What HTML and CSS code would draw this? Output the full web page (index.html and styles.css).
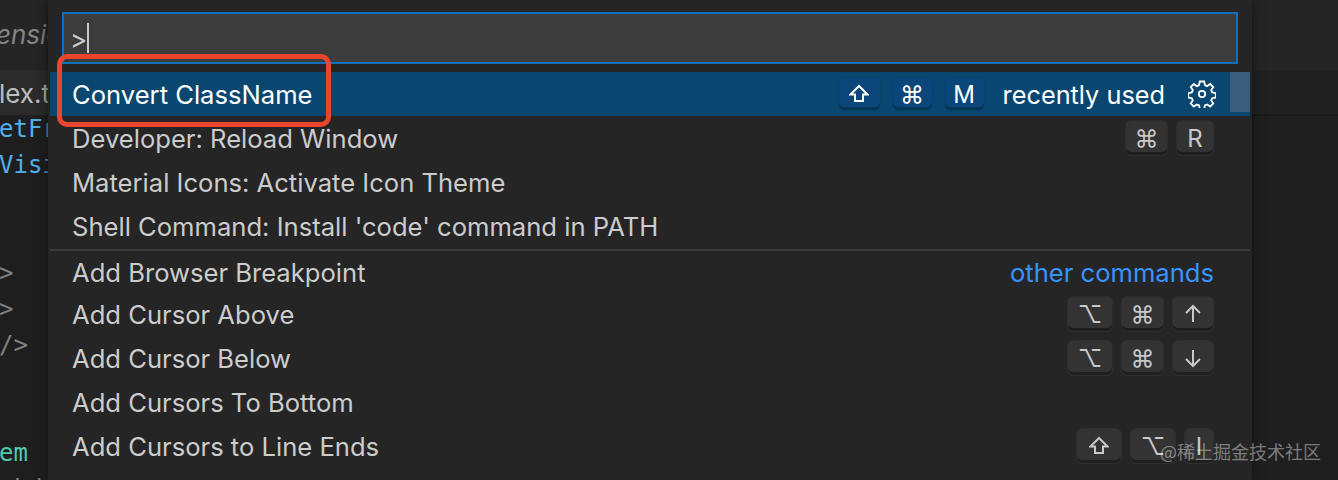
FILE: index.html
```html
<!DOCTYPE html>
<html lang="en">
<head>
  <meta charset="UTF-8" />
  <title>Command Palette</title>
  <link rel="stylesheet" href="styles.css">
</head>
<body>
  <div class="window">
    <!-- editor behind the palette -->
    <div class="editor">
      <div class="crumb">ensic</div>
      <div class="tab">lex.t</div>
      <div class="code">
        <div class="line blue">etFr</div>
        <div class="line blue">Visi</div>
        <div class="line blank"></div>
        <div class="line blank"></div>
        <div class="line grey">&gt;</div>
        <div class="line grey">&gt;</div>
        <div class="line grey">/&gt;</div>
        <div class="line blank"></div>
        <div class="line blank"></div>
        <div class="line green">em</div>
        <div class="line grey">&nbsp;kd</div>
      </div>
    </div>

    <div class="palette">
      <div class="input-wrap">
        <div class="input"><span>&gt;</span><i class="caret"></i></div>
      </div>

      <div class="row selected">
        <span class="label">Convert ClassName</span>
        <span class="keys">
          <span class="key shift"><svg class="glyph" viewBox="0 0 20 20"><path d="M10 2 1.5 10.5H6V17H14V10.5H18.5Z"/></svg></span>
          <span class="key">⌘</span>
          <span class="key">M</span>
        </span>
        <span class="note">recently used</span>
        <svg class="gear" viewBox="0 0 28 28">
          <circle cx="14" cy="14" r="3.2"/>
          <path d="M11.8 1.5h4.4l.7 3.6 2.3 1 3-2.1 3.1 3.1-2.1 3 1 2.3 3.6.7v4.4l-3.6.7-1 2.3 2.1 3-3.1 3.1-3-2.1-2.3 1-.7 3.6h-4.4l-.7-3.6-2.3-1-3 2.1-3.1-3.1 2.1-3-1-2.3-3.6-.7v-4.4l3.6-.7 1-2.3-2.1-3 3.1-3.1 3 2.1 2.3-1z"/>
        </svg>
        <i class="scroll-thumb"></i>
      </div>
      <div class="row">
        <span class="label">Developer: Reload Window</span>
        <span class="keys">
          <span class="key cmd">⌘</span>
          <span class="key letter">R</span>
        </span>
      </div>
      <div class="row"><span class="label">Material Icons: Activate Icon Theme</span></div>
      <div class="row"><span class="label">Shell Command: Install 'code' command in PATH</span></div>

      <div class="row first-other">
        <span class="label">Add Browser Breakpoint</span>
        <span class="other">other commands</span>
      </div>
      <div class="row">
        <span class="label">Add Cursor Above</span>
        <span class="keys">
          <span class="key wide">⌥</span>
          <span class="key cmd">⌘</span>
          <span class="key">
            <svg class="glyph" viewBox="0 0 20 20"><path d="M10 18V2M3 9l7-7 7 7"/></svg>
          </span>
        </span>
      </div>
      <div class="row">
        <span class="label">Add Cursor Below</span>
        <span class="keys">
          <span class="key wide">⌥</span>
          <span class="key cmd">⌘</span>
          <span class="key">
            <svg class="glyph" viewBox="0 0 20 20"><path d="M10 2V18M3 11l7 7 7-7"/></svg>
          </span>
        </span>
      </div>
      <div class="row"><span class="label">Add Cursors To Bottom</span></div>
      <div class="row">
        <span class="label">Add Cursors to Line Ends</span>
        <span class="keys">
          <span class="key wide"><svg class="glyph" viewBox="0 0 20 20"><path d="M10 2 1.5 10.5H6V17H14V10.5H18.5Z"/></svg></span>
          <span class="key wide">⌥</span>
          <span class="key narrow">I</span>
        </span>
      </div>
    </div>
  </div>

  <div class="highlight"></div>
  <div class="watermark">@稀土掘金技术社区</div>
</body>
</html>
```

FILE: styles.css
```css
* {
  box-sizing: border-box;
}

html, body {
  margin: 0;
  height: 100%;
  overflow: hidden;
}

body {
  font-family: Inter, "Noto Sans", sans-serif;
  background: #1e1e1e;
  position: relative;
}

.window {
  display: flex;
  height: 480px;
  width: 1338px;
  background: linear-gradient(#252525 0, #252525 71px, #212121 71px, #212121 114px, #181818 114px, #181818 116px, #1f1f1f 116px);
}

/* editor scraps on the left */
.editor {
  width: 48px;
  flex: none;
  overflow: hidden;
  color: #bbb;
  background: linear-gradient(#252525 0, #252525 70px, #2b2b2b 70px, #2b2b2b 115px, #1e1e1e 115px);
}

.crumb {
  height: 70px;
  padding-top: 17px;
  font-size: 26px;
  line-height: 36px;
  font-style: italic;
  color: #858585;
  margin-left: -4px;
  white-space: nowrap;
}

.tab {
  height: 45px;
  font-size: 26px;
  line-height: 48px;
  color: #bdbdbd;
  margin-left: -1px;
  white-space: nowrap;
}

.code {
  font-family: "DejaVu Sans Mono", monospace;
  font-size: 24px;
  margin-top: -4px;
  margin-left: -1px;
}

.line {
  height: 36px;
  line-height: 36px;
  white-space: nowrap;
}

.blue { color: #4fb0ea; }
.grey { color: #808080; }
.green { color: #4ec9b0; }

/* palette */
.palette {
  width: 1204px;
  flex: none;
  height: 480px;
  background: #252526;
  padding-left: 2px;
  box-shadow: 0 0 10px #111;
}

.input-wrap {
  height: 72px;
  padding: 12px 14px 0 12px;
}

.input {
  height: 52px;
  border: 2px solid #0e70c0;
  background: #3c3c3c;
  color: #ccc;
  font-size: 26px;
  line-height: 52px;
  padding-left: 6px;
  display: flex;
}

.caret {
  width: 2px;
  height: 30px;
  margin-top: 9px;
  background: #c8c8c8;
}

.row {
  height: 44px;
  margin-right: 2px;
  display: flex;
  align-items: center;
  padding: 0 36px 0 22px;
  font-size: 25.6px;
  color: #ccc;
  white-space: nowrap;
}

.row.selected {
  background: #094771;
  color: #fff;
  padding-right: 34px;
  position: relative;
}

.first-other {
  height: 43px;
  margin-top: 1px;
  border-top: 2px solid #3a3a3b;
}

.first-other .label, .other {
  padding-top: 2px;
}

.label {
  flex: 1;
}

.keys {
  display: flex;
  gap: 8px;
}

.key {
  min-width: 42px;
  height: 36px;
  display: flex;
  align-items: center;
  justify-content: center;
  font-size: 24px;
  color: #c8c8c8;
  background: #333334;
  border-radius: 6px;
  box-shadow: inset 0 -3px 0 #1f1f1f;
  border: 1px solid #2e2e2f;
}

.key.cmd {
  min-width: 43px;
}

.key.wide {
  min-width: 46px;
}

.key.letter {
  min-width: 38px;
}

.key.narrow {
  min-width: 30px;
}

.selected .keys {
  gap: 11px;
}

.selected .key {
  min-width: 41px;
  height: 34px;
  color: #fff;
  background: #0a4679;
  border-color: #0a4169;
  box-shadow: inset 0 -3px 0 #073757;
}

.selected .key.shift {
  min-width: 43px;
}

.glyph {
  width: 20px;
  height: 20px;
  fill: none;
  stroke: currentColor;
  stroke-width: 2;
}

.note {
  margin-left: 18px;
  font-size: 25.3px;
}

.gear {
  width: 28px;
  height: 28px;
  margin-left: 23px;
  fill: none;
  stroke: #fff;
  stroke-width: 1.8;
}

.scroll-thumb {
  position: absolute;
  right: 0;
  top: 0;
  width: 20px;
  height: 40px;
  background: #3a5d7b;
}

.other {
  color: #3794ff;
}

.highlight {
  position: absolute;
  left: 57px;
  top: 54px;
  width: 274px;
  height: 73px;
  border: 5px solid #e8452c;
  border-radius: 10px;
}

.watermark {
  position: absolute;
  left: 1160px;
  top: 439px;
  font-family: "Noto Sans CJK SC", sans-serif;
  font-size: 18px;
  line-height: 24px;
  color: rgba(255, 255, 255, 0.42);
}
```
